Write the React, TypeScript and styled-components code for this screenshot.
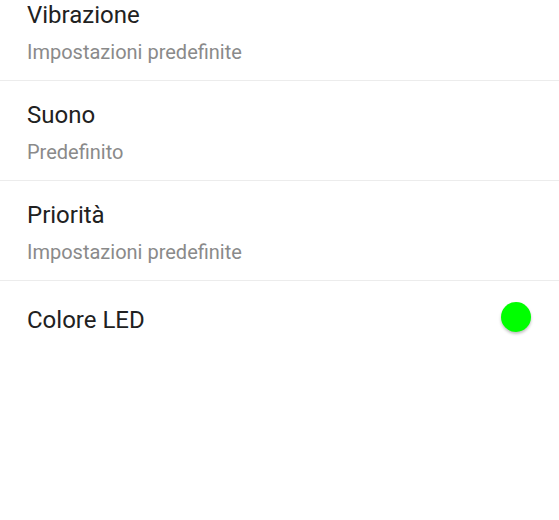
import React from "react";
import styled, { createGlobalStyle } from "styled-components";

const GlobalStyle = createGlobalStyle`
  html, body {
    margin: 0;
    padding: 0;
    background: #ffffff;
    font-family: Roboto, "Noto Sans", sans-serif;
  }
`;

const List = styled.div`
  display: flex;
  flex-direction: column;
  margin-top: -19px;
`;

const Row = styled.div<{ $last?: boolean }>`
  display: flex;
  align-items: center;
  justify-content: space-between;
  padding: ${({ $last }) => ($last ? "21px 28px 24px 27px" : "20px 28px 16px 27px")};
  border-bottom: ${({ $last }) => ($last ? "none" : "1px solid #ececec")};
`;

const TextBlock = styled.div`
  display: flex;
  flex-direction: column;
  gap: 11px;
`;

const Title = styled.div`
  font-size: 24px;
  line-height: 28px;
  color: #212121;
`;

const Summary = styled.div`
  font-size: 20px;
  line-height: 24px;
  color: #8a8a8a;
`;

const Led = styled.div<{ color: string }>`
  width: 30px;
  height: 30px;
  margin-bottom: 6px;
  border-radius: 50%;
  background: ${({ color }) => color};
  box-shadow: 0 2px 3px rgba(0, 0, 0, 0.25);
`;

const prefs = [
  { title: "Vibrazione", summary: "Impostazioni predefinite" },
  { title: "Suono", summary: "Predefinito" },
  { title: "Priorità", summary: "Impostazioni predefinite" },
];

export default function App() {
  return (
    <>
      <GlobalStyle />
      <List>
        {prefs.map((p) => (
          <Row key={p.title}>
            <TextBlock>
              <Title>{p.title}</Title>
              <Summary>{p.summary}</Summary>
            </TextBlock>
          </Row>
        ))}
        <Row $last>
          <Title>Colore LED</Title>
          <Led color="#00ff00" />
        </Row>
      </List>
    </>
  );
}
